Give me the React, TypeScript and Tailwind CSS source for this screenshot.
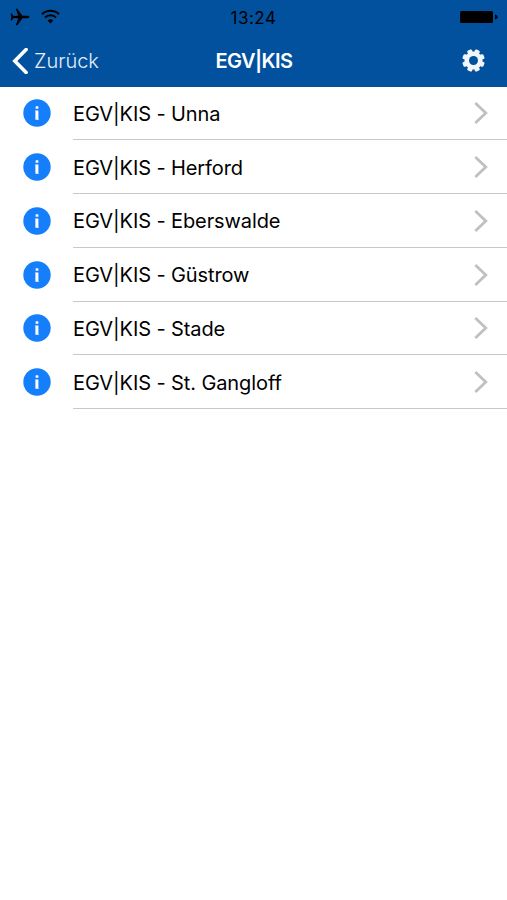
type IconProps = { className?: string };

const LOCATIONS = ["Unna", "Herford", "Eberswalde", "Güstrow", "Stade", "St. Gangloff"];

const AirplaneIcon = ({ className }: IconProps) => (
  <svg viewBox="0 0 20 18" className={className} fill="#000">
    <path d="M19.4 9c0 .8-1.2 1.2-2.3 1.2h-4.6L7.3 17.2H5.8l2.5-7-4.6-.3L1.7 12.4H.6L1.4 9 .6 5.6h1.1l2 2.5 4.6-.3-2.5-7h1.5l5.2 7h4.6c1.1 0 2.3.4 2.3 1.2z" />
  </svg>
);

const WifiIcon = ({ className }: IconProps) => (
  <svg viewBox="0 0 19 15" className={className} fill="none" stroke="#000" strokeWidth="2">
    <path d="M1 5.3a12.2 12.2 0 0 1 17 0" />
    <path d="M4 8.5a7.8 7.8 0 0 1 11 0" />
    <path d="M9.5 14.4 6.7 11.5a4 4 0 0 1 5.6 0z" fill="#000" stroke="none" />
  </svg>
);

const BatteryIcon = ({ className }: IconProps) => (
  <svg viewBox="0 0 38 12" className={className} fill="#000">
    <rect width="33" height="12" rx="1.5" />
    <path d="M35 3.5c3.6.7 3.6 4.3 0 5z" />
  </svg>
);

const GearIcon = ({ className }: IconProps) => (
  <svg viewBox="-11.5 -11.5 23 23" className={className}>
    <g fill="#f2f5f9">
      {[22.5, 67.5, 112.5, 157.5].map((angle) => (
        <rect key={angle} x="-2.6" y="-11.3" width="5.2" height="22.6" rx="1.4" transform={`rotate(${angle})`} />
      ))}
      <circle r="9" />
    </g>
    <circle r="4.5" fill="#02519f" />
  </svg>
);

const InfoIcon = ({ className }: IconProps) => (
  <svg viewBox="0 0 28 28" className={className}>
    <circle cx="14" cy="14" r="13.7" fill="#157efb" />
    <g fill="#fff">
      <rect x="12.6" y="7.3" width="2.8" height="2.5" rx=".6" />
      <path d="M12.1 11.4h3.3v8.6h.4v.8h-3.4V12.2h-.3z" />
    </g>
  </svg>
);

const StatusBar = () => (
  <div className="flex h-[34px] items-center justify-between pl-[10px] pr-[9px] text-black">
    <div className="flex flex-1 items-center gap-[11px]">
      <AirplaneIcon className="h-[18px] w-5" />
      <WifiIcon className="mb-[2px] h-[15px] w-[19px]" />
    </div>
    <span className="pr-px pt-[3px] text-[17px] tracking-[0.5px]">13:24</span>
    <div className="flex flex-1 justify-end">
      <BatteryIcon className="h-3 w-[38px]" />
    </div>
  </div>
);

const NavBar = () => (
  <div className="flex h-[53px] items-center px-3">
    <button className="flex flex-1 items-center gap-[6px] text-[20px] font-light text-[#e6eef7]">
      <svg viewBox="0 0 16 26" className="h-[26px] w-4" fill="none" stroke="#fff" strokeWidth="3.6">
        <path d="M14.1 1.6 2.8 13l11.3 11.4" strokeLinecap="round" />
      </svg>
      Zurück
    </button>
    <h1 className="pl-px text-[20px] font-semibold tracking-[-0.6px] text-white">EGV|KIS</h1>
    <div className="flex flex-1 justify-end">
      <GearIcon className="mr-[10px] h-[23px] w-[23px]" />
    </div>
  </div>
);

const LocationRow = ({ name }: { name: string }) => (
  <li className="flex h-[53.8px] items-center pl-[23px]">
    <InfoIcon className="h-7 w-7" />
    <div className="ml-[22px] flex h-full flex-1 items-center justify-between border-b border-[#c8c8cb] pr-[19px]">
      <span className="pt-[2px] text-[20px] tracking-[-0.1px] text-black">EGV|KIS - {name}</span>
      <svg viewBox="0 0 14 22" className="mt-px h-[22px] w-[14px]" fill="none" stroke="#c0c0c3" strokeWidth="2.8">
        <path d="m1.3 1 10.5 10L1.3 21" />
      </svg>
    </div>
  </li>
);

const App = () => {
  return (
    <div className="min-h-[900px] w-full bg-white font-['Inter',sans-serif]">
      <header className="h-[87px] bg-[#02519f]">
        <StatusBar />
        <NavBar />
      </header>
      <ul className="-mt-[0.7px]">
        {LOCATIONS.map((name) => (
          <LocationRow key={name} name={name} />
        ))}
      </ul>
    </div>
  );
};

export default App;
